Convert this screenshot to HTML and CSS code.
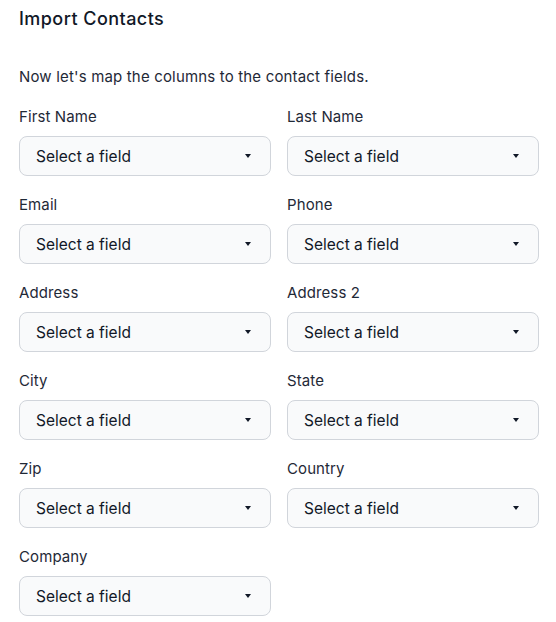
FILE: index.html
```html
<!DOCTYPE html>
<html lang="en">
<head>
  <meta charset="UTF-8" />
  <meta name="viewport" content="width=device-width, initial-scale=1.0"/>
  <title>Import Contacts</title>
  <link rel="stylesheet" href="styles.css">
</head>
<body>
  <h2 class="title">Import Contacts</h2>
  <p class="intro">Now let's map the columns to the contact fields.</p>

  <div class="fields">
    <div class="field">
      <label>First Name</label>
      <div class="select">Select a field<span class="caret"></span></div>
    </div>
    <div class="field">
      <label>Last Name</label>
      <div class="select">Select a field<span class="caret"></span></div>
    </div>
    <div class="field">
      <label>Email</label>
      <div class="select">Select a field<span class="caret"></span></div>
    </div>
    <div class="field">
      <label>Phone</label>
      <div class="select">Select a field<span class="caret"></span></div>
    </div>
    <div class="field">
      <label>Address</label>
      <div class="select">Select a field<span class="caret"></span></div>
    </div>
    <div class="field">
      <label>Address 2</label>
      <div class="select">Select a field<span class="caret"></span></div>
    </div>
    <div class="field">
      <label>City</label>
      <div class="select">Select a field<span class="caret"></span></div>
    </div>
    <div class="field">
      <label>State</label>
      <div class="select">Select a field<span class="caret"></span></div>
    </div>
    <div class="field">
      <label>Zip</label>
      <div class="select">Select a field<span class="caret"></span></div>
    </div>
    <div class="field">
      <label>Country</label>
      <div class="select">Select a field<span class="caret"></span></div>
    </div>
    <div class="field">
      <label>Company</label>
      <div class="select">Select a field<span class="caret"></span></div>
    </div>
  </div>
</body>
</html>
```

FILE: styles.css
```css
body {
  margin: 0;
  padding: 0 19px;
  font-family: Inter, 'Noto Sans', sans-serif;
  color: #1f2937;
  background: #ffffff;
}

.title {
  margin: 5px 0 0;
  font-size: 18px;
  line-height: 28px;
  font-weight: 500;
  color: #111827;
  letter-spacing: 0.45px;
}

.intro {
  margin: 34px 0 0;
  font-size: 15px;
  line-height: 20px;
  letter-spacing: 0.17px;
}

.fields {
  width: 520px;
  margin-top: 20px;
  display: grid;
  grid-template-columns: 1fr 1fr;
  column-gap: 16px;
  row-gap: 19px;
}

.field label {
  display: block;
  font-size: 15px;
  line-height: 20px;
  margin-bottom: 9px;
  letter-spacing: 0.1px;
}

.select {
  height: 40px;
  box-sizing: border-box;
  display: flex;
  align-items: center;
  justify-content: space-between;
  padding: 0 19px 0 16px;
  border: 1px solid #d1d5db;
  border-radius: 8px;
  background: #f9fafb;
  font-size: 15.5px;
  color: #111827;
}

.caret {
  width: 0;
  height: 0;
  border-left: 3px solid transparent;
  border-right: 3px solid transparent;
  border-top: 4px solid #111827;
}
```
